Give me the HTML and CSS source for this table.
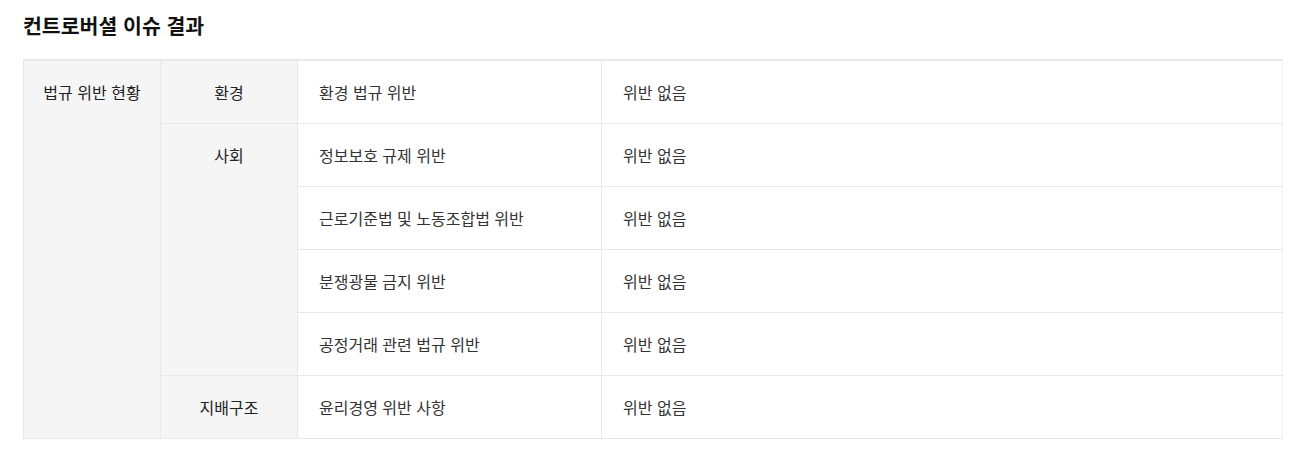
FILE: index.html
```html
<!DOCTYPE html>
<html lang="ko">
<head>
    <meta charset="UTF-8">
    <meta name="viewport" content="width=device-width, initial-scale=1.0">
    <title>컨트로버셜 이슈 결과</title>
    <link rel="stylesheet" href="styles.css">
</head>
<body>

<div class="section">
    <h2 class="section-title">컨트로버셜 이슈 결과</h2>

    <table class="issue-table">
        <colgroup>
            <col class="col-group">
            <col class="col-area">
            <col class="col-item">
            <col>
        </colgroup>
        <tbody>
            <tr>
                <th rowspan="6">법규 위반 현황</th>
                <th>환경</th>
                <td>환경 법규 위반</td>
                <td>위반 없음</td>
            </tr>
            <tr>
                <th rowspan="4">사회</th>
                <td>정보보호 규제 위반</td>
                <td>위반 없음</td>
            </tr>
            <tr>
                <td>근로기준법 및 노동조합법 위반</td>
                <td>위반 없음</td>
            </tr>
            <tr>
                <td>분쟁광물 금지 위반</td>
                <td>위반 없음</td>
            </tr>
            <tr>
                <td>공정거래 관련 법규 위반</td>
                <td>위반 없음</td>
            </tr>
            <tr>
                <th>지배구조</th>
                <td>윤리경영 위반 사항</td>
                <td>위반 없음</td>
            </tr>
        </tbody>
    </table>
</div>

</body>
</html>
```

FILE: styles.css
```css
body {
    margin: 0;
    padding: 12px 27px 0 23px;
    font-family: "Noto Sans CJK KR", "Noto Sans", sans-serif;
    color: #222;
    background-color: #fff;
}

.section-title {
    margin: 0;
    font-size: 20.5px;
    line-height: 26px;
    font-weight: bold;
    color: #111;
}

.issue-table {
    width: 100%;
    margin-top: 21px;
    border-collapse: collapse;
    table-layout: fixed;
    border-top: 2px solid #e8e8e8;
    font-size: 16px;
}

.col-group,
.col-area {
    width: 137px;
}

.col-item {
    width: 304px;
}

.issue-table th,
.issue-table td {
    border: 1px solid #e8e8e8;
    line-height: 22px;
    padding: 20px 21px;
}

.issue-table th {
    background-color: #f5f5f5;
    font-weight: normal;
    text-align: center;
    vertical-align: top;
    color: #222;
    padding-left: 6px;
    padding-right: 6px;
}

.issue-table td {
    text-align: left;
    vertical-align: middle;
    color: #333;
}

.issue-table td:last-child {
    border-right-color: #f0f0f0;
}
```
